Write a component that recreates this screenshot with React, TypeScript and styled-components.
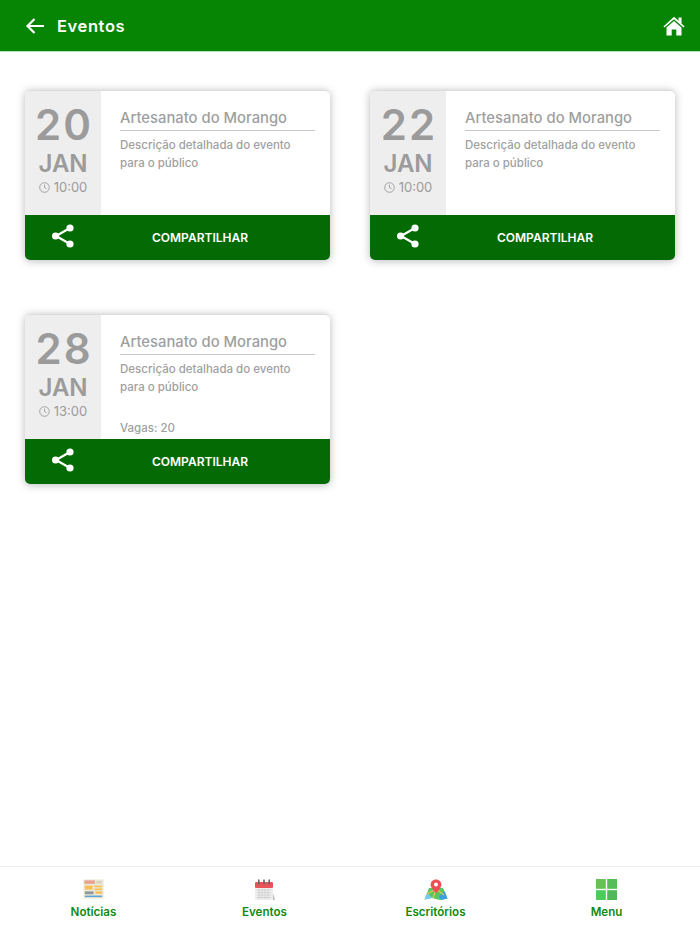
import React from 'react';
import styled, { createGlobalStyle } from 'styled-components';

const GlobalStyle = createGlobalStyle`
  html, body { margin: 0; padding: 0; background: #fff; }
  body { font-family: Inter, "Liberation Sans", sans-serif; }
`;

const Page = styled.div`
  width: 700px;
  height: 934px;
  display: flex;
  flex-direction: column;
  overflow: hidden;
`;

const Header = styled.header`
  height: 51px;
  flex: none;
  background: #068504;
  border-bottom: 1px solid #b9e0b8;
  display: flex;
  align-items: center;
  padding: 0 15px 0 25px;
`;

const Title = styled.h1`
  margin: 0 0 0 12px;
  font-size: 16.5px;
  font-weight: 600;
  letter-spacing: 0.6px;
  color: #fff;
  flex: 1;
`;

const Content = styled.main`
  flex: 1;
  display: grid;
  grid-template-columns: 305px 305px;
  grid-auto-rows: 170px;
  column-gap: 40px;
  row-gap: 54px;
  align-content: start;
  padding: 38px 25px 0;
`;

const Card = styled.article`
  border-radius: 5px;
  overflow: hidden;
  background: #fff;
  border-top: 1px solid #dcdcdc;
  box-sizing: border-box;
  box-shadow: 0 1px 8px rgba(0, 0, 0, 0.28);
  display: flex;
  flex-direction: column;
`;

const CardBody = styled.div`
  flex: 1;
  display: flex;
  min-height: 0;
`;

const DateColumn = styled.div`
  width: 76px;
  flex: none;
  background: #eeeeee;
  color: #9b9b9b;
  display: flex;
  flex-direction: column;
  align-items: center;
  padding-top: 9px;
  box-sizing: border-box;
`;

const Day = styled.div`
  font-size: 42px;
  line-height: 50px;
  font-weight: 600;
  letter-spacing: 2px;
  margin-right: -2px;
`;

const Month = styled.div`
  font-size: 24px;
  line-height: 28px;
  font-weight: 600;
`;

const Time = styled.div`
  font-size: 13px;
  line-height: 16px;
  margin-top: 1px;
  display: flex;
  align-items: center;
  gap: 4px;
`;

const Info = styled.div`
  flex: 1;
  position: relative;
  padding: 17px 15px 0 19px;
  color: #9f9f9f;
`;

const EventName = styled.div`
  font-size: 14.8px;
  line-height: 20px;
  font-weight: 500;
  padding-bottom: 2px;
  border-bottom: 1px solid #c8c8c8;
  white-space: nowrap;
`;

const Description = styled.p`
  margin: 5px 0 0;
  font-size: 11.5px;
  line-height: 18px;
  font-weight: 500;
`;

const Seats = styled.div`
  position: absolute;
  left: 19px;
  bottom: 2px;
  font-size: 11.5px;
  line-height: 18px;
  font-weight: 500;
`;

const ShareBar = styled.div`
  height: 45px;
  flex: none;
  background: #046b04;
  color: #fff;
  display: flex;
  align-items: center;
`;

const ShareIconSlot = styled.div`
  width: 76px;
  display: flex;
  justify-content: center;
  margin-top: -4px;
`;

const ShareLabel = styled.div`
  width: 198px;
  text-align: center;
  font-size: 12px;
  font-weight: 600;
`;

const TabBar = styled.nav`
  height: 67px;
  flex: none;
  border-top: 1px solid #eeeeee;
  display: grid;
  grid-template-columns: 1fr 1fr 1fr 1fr;
  padding: 0 8px;
`;

const Tab = styled.div`
  display: flex;
  flex-direction: column;
  align-items: center;
  padding-top: 12px;
  color: #128a12;
  font-size: 11.6px;
  font-weight: 600;
  line-height: 16px;
`;

const TabIcon = styled.div`
  height: 25px;
`;

const BackIcon = () => (
  <svg width="20" height="18" viewBox="0 0 20 18" fill="none" stroke="#fff" strokeWidth="2.2">
    <path d="M19 9H3M9.5 2 2.5 9l7 7" />
  </svg>
);

const HomeIcon = () => (
  <svg width="22" height="20" viewBox="0 0 22 20" fill="#fff">
    <path d="M11 0.8 0.4 10.4l1.1 1.2L11 3.2l9.5 8.4 1.1-1.2-3.1-2.8V1.6h-3v3.1z" />
    <path d="M11 4.9 3.5 11.5V19.5h5.2v-6h4.6v6h5.2v-8z" />
  </svg>
);

const ClockIcon = () => (
  <svg width="11" height="11" viewBox="0 0 11 11" fill="none" stroke="#9b9b9b" strokeWidth="0.9">
    <circle cx="5.5" cy="5.5" r="4.8" />
    <path d="M5.5 2.6v3l2 1" />
  </svg>
);

const ShareIcon = () => (
  <svg width="24" height="26" viewBox="0 0 24 26" fill="#fff" stroke="#fff">
    <path d="M19 5 5 13l14 8" fill="none" strokeWidth="2.2" />
    <circle cx="19" cy="5" r="3.6" stroke="none" />
    <circle cx="4.6" cy="13" r="3.6" stroke="none" />
    <circle cx="19" cy="21" r="3.6" stroke="none" />
  </svg>
);

const NewsIcon = () => (
  <svg width="21" height="20" viewBox="0 0 22 21">
    <rect x="0.5" y="0.5" width="21" height="20" fill="#ece6d2" />
    <rect x="1.5" y="1.5" width="11" height="3.5" fill="#e8a090" />
    <rect x="14" y="2" width="6" height="2.5" fill="#d4d4c4" />
    <rect x="2" y="7" width="8" height="4" fill="#f9c04f" />
    <rect x="12" y="7" width="8" height="1.6" fill="#f9c04f" />
    <rect x="12" y="10" width="8" height="1.6" fill="#f9c04f" />
    <rect x="2" y="13" width="9" height="3" fill="#8d9a9a" />
    <rect x="13" y="13" width="7" height="2.4" fill="#f9c04f" />
    <rect x="2" y="17.4" width="18" height="1.6" fill="#5ba5dc" />
  </svg>
);

const CalendarIcon = () => (
  <svg width="22" height="22" viewBox="0 0 22 22">
    <path d="M1 4h18v17H1z" fill="#eeeeee" />
    <path d="M19 14v7h2z" fill="#bdbdbd" />
    <rect x="1" y="3" width="18" height="6" rx="1" fill="#e9545a" />
    <rect x="4" y="0.5" width="1.6" height="5" fill="#666" />
    <rect x="9.2" y="0.5" width="1.6" height="5" fill="#666" />
    <rect x="14.4" y="0.5" width="1.6" height="5" fill="#666" />
    <path d="M3 11h14M3 13.5h14M3 16h14M3 18.5h14M5 10v10M8 10v10M11 10v10M14 10v10" stroke="#cfcfcf" strokeWidth="0.8" />
  </svg>
);

const MapIcon = () => (
  <svg width="24" height="22" viewBox="0 0 24 22">
    <path d="M5 9 0.5 20.5 8 19l8 2 7.5-1.5L19 9z" fill="#57c95c" />
    <path d="M0.5 20.5 3 14l6 5.2L8 19z" fill="#79c9ee" />
    <path d="M17 21l6.5-1.5L20.5 12 15 17z" fill="#3d9fe0" />
    <path d="M3 15 12 10l8 6M9 19l3-9" stroke="#e8c25a" strokeWidth="1.2" fill="none" />
    <path d="M12 0.5c-3.2 0-5.4 2.3-5.4 5.2C6.6 9 12 14 12 14s5.4-5 5.4-8.3c0-2.9-2.2-5.2-5.4-5.2z" fill="#ee4f55" />
    <circle cx="12" cy="5.6" r="2" fill="#fff" />
  </svg>
);

const MenuIcon = () => (
  <svg width="21" height="21" viewBox="0 0 21 21">
    <rect x="0" y="0" width="9.8" height="9.8" fill="#6bbf59" />
    <rect x="11.2" y="0" width="9.8" height="9.8" fill="#57bd5b" />
    <rect x="0" y="11.2" width="9.8" height="9.8" fill="#4ccb5c" />
    <rect x="11.2" y="11.2" width="9.8" height="9.8" fill="#4fb85a" />
  </svg>
);

type EventItem = { day: string; time: string; seats?: number };

const events: EventItem[] = [
  { day: '20', time: '10:00' },
  { day: '22', time: '10:00' },
  { day: '28', time: '13:00', seats: 20 },
];

const tabs = [
  { label: 'Notícias', icon: <NewsIcon /> },
  { label: 'Eventos', icon: <CalendarIcon /> },
  { label: 'Escritórios', icon: <MapIcon /> },
  { label: 'Menu', icon: <MenuIcon /> },
];

export default function App() {
  return (
    <Page>
      <GlobalStyle />
      <Header>
        <BackIcon />
        <Title>Eventos</Title>
        <HomeIcon />
      </Header>

      <Content>
        {events.map((event) => (
          <Card key={event.day}>
            <CardBody>
              <DateColumn>
                <Day>{event.day}</Day>
                <Month>JAN</Month>
                <Time>
                  <ClockIcon />
                  {event.time}
                </Time>
              </DateColumn>
              <Info>
                <EventName>Artesanato do Morango</EventName>
                <Description>
                  Descrição detalhada do evento
                  <br />
                  para o público
                </Description>
                {event.seats ? <Seats>Vagas: {event.seats}</Seats> : null}
              </Info>
            </CardBody>
            <ShareBar>
              <ShareIconSlot>
                <ShareIcon />
              </ShareIconSlot>
              <ShareLabel>COMPARTILHAR</ShareLabel>
            </ShareBar>
          </Card>
        ))}
      </Content>

      <TabBar>
        {tabs.map((tab) => (
          <Tab key={tab.label}>
            <TabIcon>{tab.icon}</TabIcon>
            {tab.label}
          </Tab>
        ))}
      </TabBar>
    </Page>
  );
}
